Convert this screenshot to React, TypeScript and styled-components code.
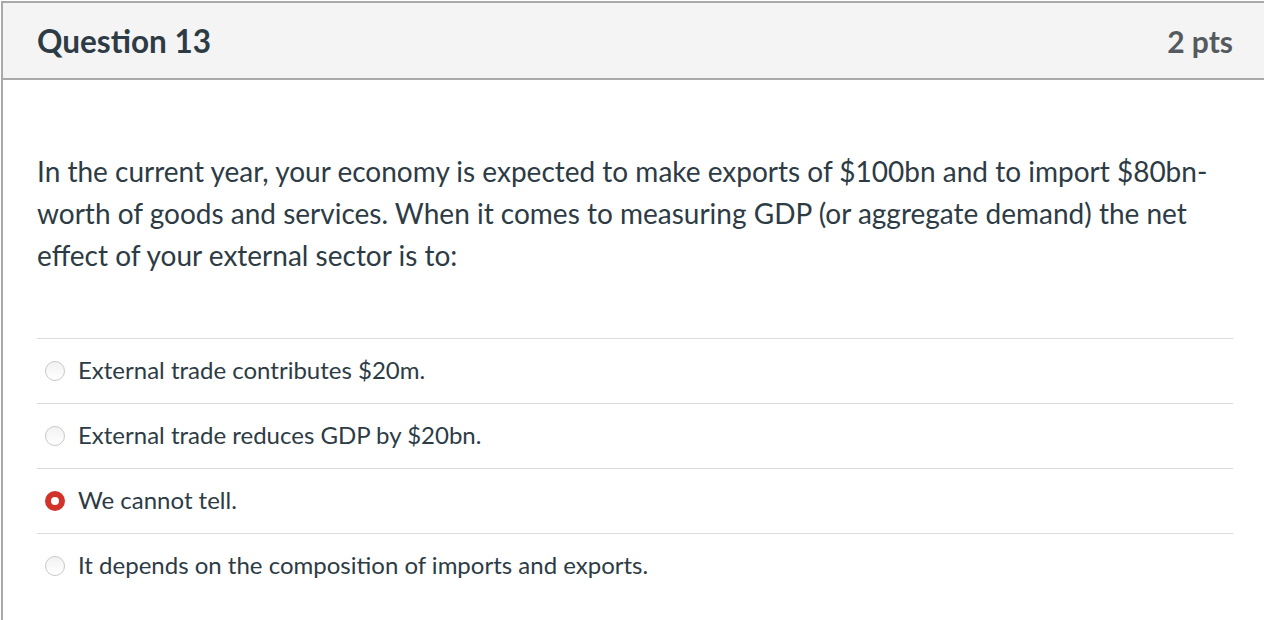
import React from "react";
import styled, { createGlobalStyle } from "styled-components";

const Global = createGlobalStyle`
  html, body { margin: 0; padding: 0; background: #fff; overflow: hidden; }
  body { font-family: Lato, "Noto Sans", sans-serif; color: #2d3b45; }
`;

const Panel = styled.section`
  margin: 1px 0 0 1px;
  width: 1266px;
  min-height: 640px;
  border: 2px solid #a9a9a9;
  box-sizing: border-box;
  background: #fff;
`;

const Header = styled.header`
  height: 77px;
  box-sizing: border-box;
  background: #f4f4f4;
  border-bottom: 2px solid #a9a9a9;
  display: flex;
  align-items: center;
  justify-content: space-between;
  padding: 0 32px 0 34px;
`;

const Title = styled.h2`
  margin: 0;
  font-size: 31.5px;
  font-weight: 700;
  color: #2d3b45;
`;

const Points = styled.span`
  font-size: 30px;
  font-weight: 700;
  color: #555a5e;
`;

const Content = styled.div`
  padding: 70px 32px 0 34px;
`;

const QuestionText = styled.p`
  margin: 0;
  font-size: 28px;
  line-height: 42px;
  color: #2d3b45;
`;

const Answers = styled.ul`
  list-style: none;
  margin: 62px 0 0 0;
  padding: 0;
`;

const Answer = styled.li`
  height: 65px;
  box-sizing: border-box;
  border-top: 1px solid #dcdcdc;
  display: flex;
  align-items: center;
  gap: 13px;
  padding: 0 0 3px 8px;
  font-size: 24px;
  color: #2d3b45;
`;

const Radio = styled.span<{ $checked?: boolean }>`
  width: 20px;
  height: 20px;
  margin-top: 2px;
  border-radius: 50%;
  box-sizing: border-box;
  flex: none;
  ${(p) =>
    p.$checked
      ? `background: #fff; border: 6px solid #d1332a;`
      : `background: linear-gradient(#f2f2f2, #ffffff); border: 1px solid #c8c8c8;`}
`;

const answers = [
  { text: "External trade contributes $20m.", checked: false },
  { text: "External trade reduces GDP by $20bn.", checked: false },
  { text: "We cannot tell.", checked: true },
  { text: "It depends on the composition of imports and exports.", checked: false },
];

export default function App() {
  return (
    <>
      <Global />
      <Panel>
        <Header>
          <Title>Question 13</Title>
          <Points>2 pts</Points>
        </Header>
        <Content>
          <QuestionText>
            In the current year, your economy is expected to make exports of $100bn and to import $80bn-worth of goods and services. When it comes to measuring GDP (or aggregate demand) the net effect of your external sector is to:
          </QuestionText>
          <Answers>
            {answers.map((a) => (
              <Answer key={a.text}>
                <Radio $checked={a.checked} />
                {a.text}
              </Answer>
            ))}
          </Answers>
        </Content>
      </Panel>
    </>
  );
}
